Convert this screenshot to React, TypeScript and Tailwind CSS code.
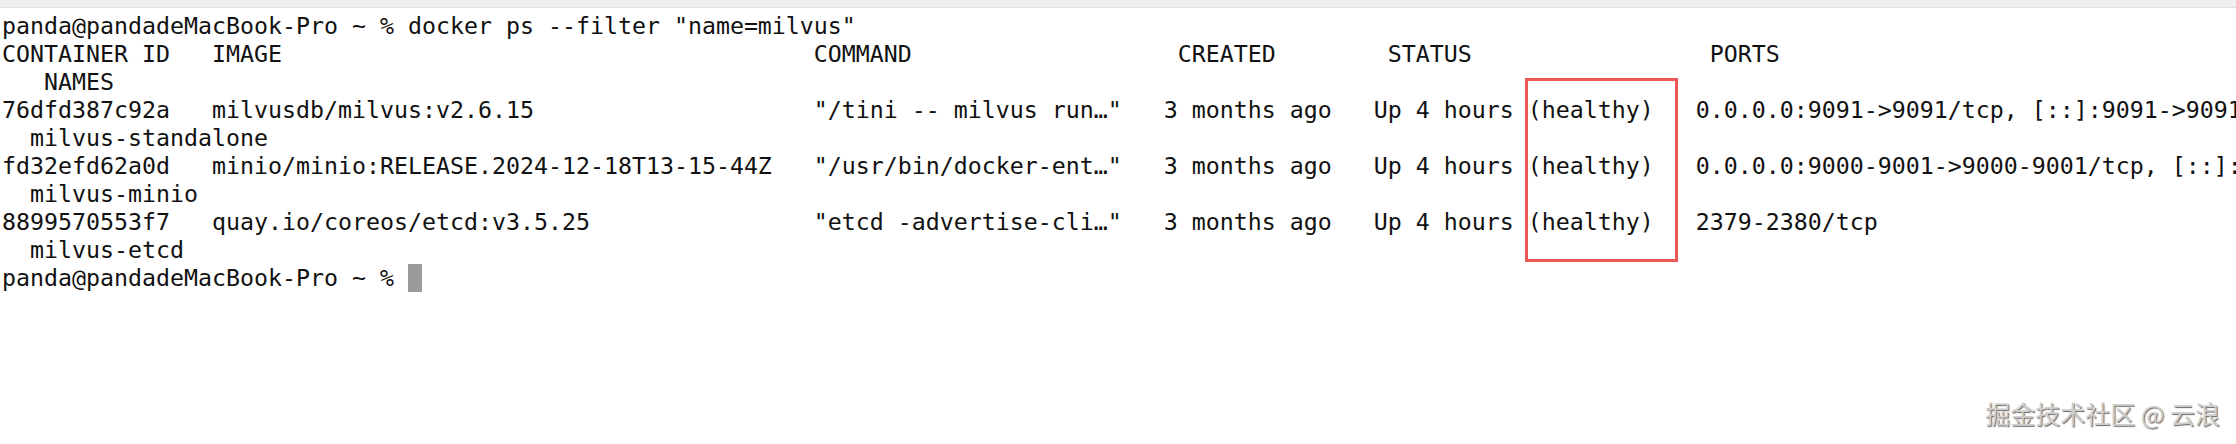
import React from "react";

const lines = [
  'panda@pandadeMacBook-Pro ~ % docker ps --filter "name=milvus"',
  "CONTAINER ID   IMAGE                                      COMMAND                   CREATED        STATUS                 PORTS",
  "   NAMES",
  '76dfd387c92a   milvusdb/milvus:v2.6.15                    "/tini -- milvus run…"   3 months ago   Up 4 hours (healthy)   0.0.0.0:9091->9091/tcp, [::]:9091->9091/tcp',
  "  milvus-standalone",
  'fd32efd62a0d   minio/minio:RELEASE.2024-12-18T13-15-44Z   "/usr/bin/docker-ent…"   3 months ago   Up 4 hours (healthy)   0.0.0.0:9000-9001->9000-9001/tcp, [::]:9000-9001->9000-9001/tcp',
  "  milvus-minio",
  '8899570553f7   quay.io/coreos/etcd:v3.5.25                "etcd -advertise-cli…"   3 months ago   Up 4 hours (healthy)   2379-2380/tcp',
  "  milvus-etcd",
];

const App = () => {
  return (
    <div className="relative h-[444px] w-[2236px] overflow-hidden bg-white">
      {/* window top strip */}
      <div className="h-[8px] border-b border-[#e2e0e0] bg-[#f1efef]" />

      <pre className="pl-[2px] pt-[4px] font-['DejaVu_Sans_Mono','Liberation_Mono',monospace] text-[23.25px] leading-[28px] text-[#111] whitespace-pre">
        {lines.map((line, idx) => (
          <div key={idx} className="h-[28px]">
            {line}
          </div>
        ))}
        <div className="flex h-[28px] items-start">
          <span>panda@pandadeMacBook-Pro ~ % </span>
          <span className="inline-block h-[28px] w-[14px] bg-[#9b9b9b]" />
        </div>
      </pre>

      {/* highlight box */}
      <div className="absolute left-[1525px] top-[78px] h-[184px] w-[153px] border-[3px] border-[#eb5757]" />

      {/* watermark */}
      <div className="absolute right-[16px] top-[399px] font-['Noto_Sans_CJK_SC',sans-serif] text-[25px] leading-[28px] text-[#cfcfcf] [text-shadow:1px_1px_1px_rgba(0,0,0,0.6)]">
        掘金技术社区 @ 云浪
      </div>
    </div>
  );
};

export default App;
